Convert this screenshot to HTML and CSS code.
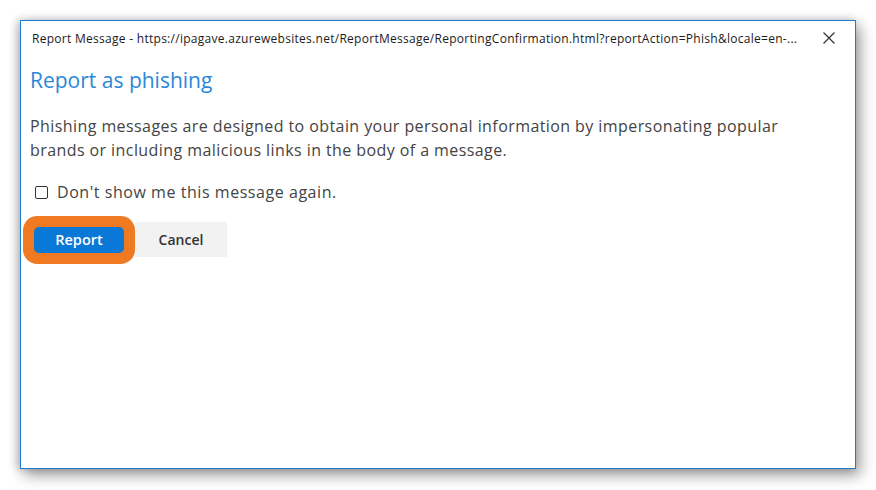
FILE: index.html
```html
<!DOCTYPE html>
<html lang="en">
<head>
  <meta charset="UTF-8" />
  <title>Report Message</title>
  <link rel="stylesheet" href="styles.css">
</head>
<body>
  <div class="window">
    <div class="titlebar">
      <span class="title">Report Message - https://ipagave.azurewebsites.net/ReportMessage/ReportingConfirmation.html?reportAction=Phish&amp;locale=en-...</span>
      <svg class="close" width="12" height="12" viewBox="0 0 12 12">
        <path d="M0.5 0.5 L11.5 11.5 M11.5 0.5 L0.5 11.5" stroke="#333" stroke-width="1.2" fill="none"/>
      </svg>
    </div>

    <div class="content">
      <h1>Report as phishing</h1>
      <p class="desc">Phishing messages are designed to obtain your personal information by impersonating popular brands or including malicious links in the body of a message.</p>

      <label class="check">
        <span class="box"></span>
        Don't show me this message again.
      </label>

      <div class="actions">
        <button class="btn report">Report</button>
        <button class="btn cancel">Cancel</button>
      </div>
    </div>
  </div>
</body>
</html>
```

FILE: styles.css
```css
body {
  margin: 0;
  padding: 20px 0 21px 20px;
  background-color: #ffffff;
  font-family: 'Open Sans', 'Noto Sans', sans-serif;
  color: #333333;
}

.window {
  width: 834px;
  height: 447px;
  border: 1px solid #1a7bd3;
  background: #ffffff;
  box-shadow: 4px 6px 14px rgba(0, 0, 0, 0.4), -3px 0 8px rgba(0, 0, 0, 0.2);
}

.titlebar {
  height: 34px;
  display: flex;
  align-items: center;
  justify-content: space-between;
  padding: 0 20px 0 11px;
}

.title {
  font-size: 12px;
  letter-spacing: 0.28px;
  color: #1b1b1b;
  white-space: nowrap;
}

.close {
  display: block;
}

.content {
  padding: 0 9px;
}

h1 {
  margin: 10px 0 0;
  font-size: 21px;
  line-height: 30px;
  font-weight: normal;
  color: #2b88d8;
}

.desc {
  margin: 19px 0 0;
  font-size: 16px;
  letter-spacing: 0.42px;
  line-height: 24px;
  color: #444444;
  max-width: 775px;
}

.check {
  display: flex;
  align-items: center;
  margin-top: 18px;
  height: 24px;
  padding-left: 5px;
  font-size: 16px;
  letter-spacing: 0.55px;
  color: #444444;
}

.box {
  width: 11px;
  height: 11px;
  border: 1px solid #333333;
  border-radius: 2px;
  margin-right: 9px;
}

.actions {
  display: flex;
  margin-top: 18px;
  height: 35px;
  align-items: center;
}

.btn {
  font-family: 'Open Sans', 'Noto Sans', sans-serif;
  font-size: 14px;
  font-weight: 600;
  border: none;
  cursor: pointer;
}

.report {
  margin-left: 4px;
  width: 90px;
  height: 26px;
  font-size: 14.5px;
  background-color: #0a78d6;
  color: #ffffff;
  border-radius: 5px;
  box-shadow: 0 0 0 11px #f07a22;
}

.cancel {
  margin-left: 11px;
  width: 92px;
  height: 35px;
  background-color: #f2f2f2;
  color: #333333;
}
```
